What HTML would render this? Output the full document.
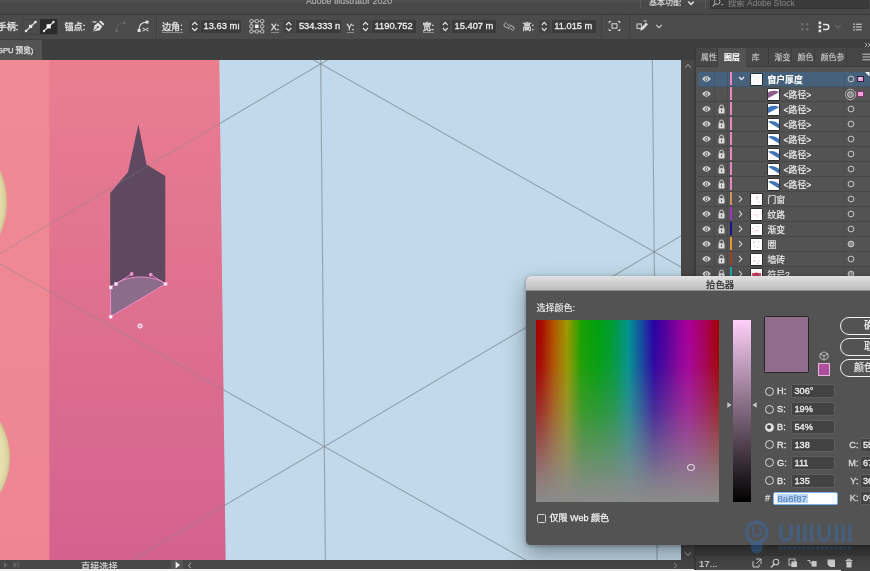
<!DOCTYPE html>
<html><head><meta charset="utf-8"><title>Adobe Illustrator 2020</title>
<style>
*{box-sizing:border-box;margin:0;padding:0}
html,body{width:870px;height:571px;overflow:hidden;background:#4a4a4a}
body{position:relative;font-family:"Liberation Sans","Noto Sans CJK SC",sans-serif;color:#e6e6e6;font-size:10px;line-height:1}
.a{position:absolute}
.fld,.lbl,.pf,.pl{-webkit-text-stroke:.28px currentColor}
.nm,.btn,.t{-webkit-text-stroke:.14px currentColor}
.t{position:absolute;white-space:nowrap;line-height:12px;height:12px}
.fld{position:absolute;top:20px;height:13px;background:#3b3b3b;border-radius:1.5px;color:#f0f0f0;font-size:9.3px;line-height:13px;padding-left:2.6px;white-space:nowrap;overflow:hidden}
.stp{position:absolute;top:20px;height:13px;width:11px;background:#424242;border-radius:1.5px}
.lbl{position:absolute;top:21.4px;height:12px;line-height:12px;font-size:9.1px;color:#e4e4e4;white-space:nowrap}
.ul{border-bottom:1px solid #8c8c8c;height:11.2px}
.row{position:absolute;left:698.2px;width:171.8px;height:15px;background:#535353;border-bottom:1px solid #474747}
.row.sel{background:#46617c}
.nm{position:absolute;top:2.3px;font-size:8.8px;line-height:12px;color:#f2f2f2;white-space:nowrap}
.th{position:absolute;top:1px;width:13px;height:13px;background:#fff;border:1px solid #2e2e2e;border-radius:1px;overflow:hidden}
.cb{position:absolute;left:31.4px;top:.6px;width:2.6px;height:13.4px}
.pf{position:absolute;left:790.5px;width:44.5px;height:14px;background:#424242;border:1px solid #5e5e5e;border-radius:2px;color:#f4f4f4;font-size:9.2px;line-height:12px;padding-left:3px}
.pl{position:absolute;font-size:9.2px;line-height:12px;color:#ececec;white-space:nowrap}
.rd{position:absolute;left:764.5px;width:9px;height:9px;border:1.2px solid #d8d8d8;border-radius:50%}
.btn{position:absolute;left:840px;width:40px;height:18px;border:1.3px solid #f2f2f2;border-radius:9px;color:#f4f4f4;font-size:10px;line-height:15px;white-space:nowrap}
</style></head><body><div id="app" style="position:absolute;left:0;top:0;width:870px;height:571px;overflow:hidden;will-change:transform">
<div class="a" style="left:0;top:0;width:870px;height:14.7px;background:linear-gradient(#505050,#484848 3px);border-bottom:1.2px solid #393939"></div>
<div class="t" style="left:306px;top:-4.9px;font-size:8.8px;color:#b2b2b2">Adobe Illustrator 2020</div>
<div class="a" style="left:640px;top:0;width:1px;height:9px;background:#5a5a5a"></div>
<div class="t" style="left:649px;top:-3.3px;font-size:8px;color:#e2e2e2">基本功能</div>
<svg class="a" style="left:687px;top:0" width="8" height="7" viewBox="0 0 8 7"><path d="M1.2 1.6 L4 4.4 L6.8 1.6" fill="none" stroke="#d8d8d8" stroke-width="1.5"/></svg>
<div class="a" style="left:705px;top:0;width:1px;height:9px;background:#5a5a5a"></div>
<div class="a" style="left:710px;top:-2px;width:159px;height:10.5px;background:#3a3a3a;border:1px solid #333;border-radius:2px"></div>
<svg class="a" style="left:712px;top:0" width="12" height="8" viewBox="0 0 12 8"><circle cx="5.2" cy="1.6" r="2.8" fill="none" stroke="#b5b5b5" stroke-width="1"/><path d="M3.2 3.8 L0.8 6.4" stroke="#b5b5b5" stroke-width="1.1"/><path d="M9 4 l1.3 1.4 l1.3 -1.4z" fill="#b5b5b5"/></svg>
<div class="t" style="left:728px;top:-3.5px;font-size:8.4px;color:#7d7d7d">搜索 Adobe Stock</div>
<div class="a" style="left:0;top:14.7px;width:870px;height:24.5px;background:#4b4b4b"></div>
<div class="lbl" style="left:-2.4px">手柄:</div>
<div class="a" style="left:22px;top:18.5px;width:35.5px;height:16px;border:1px solid #434343;border-radius:2px"></div>
<div class="a" style="left:40px;top:19px;width:16.5px;height:15px;background:#2b2b2b"></div>
<svg class="a" style="left:24px;top:19px" width="14" height="15" viewBox="0 0 14 15"><path d="M2 12 L11.5 3" stroke="#e0e0e0" stroke-width="1.1"/><rect x="5" y="5.8" width="3.2" height="3.2" fill="#e8e8e8"/><circle cx="2" cy="12" r="1.3" fill="#e8e8e8"/><circle cx="11.5" cy="3" r="1.3" fill="#e8e8e8"/></svg>
<svg class="a" style="left:41.5px;top:19px" width="14" height="15" viewBox="0 0 14 15"><path d="M2 12 L11.5 3" stroke="#e0e0e0" stroke-width="1.1"/><rect x="4.6" y="5.2" width="4.2" height="4.2" fill="#ffffff"/><circle cx="2" cy="12" r="1.2" fill="#e8e8e8"/><circle cx="11.5" cy="3" r="1.2" fill="#e8e8e8"/></svg>
<div class="lbl" style="left:64.5px">锚点:</div>
<svg class="a" style="left:92px;top:20px" width="13" height="13" viewBox="0 0 13 13"><path d="M1.2 11.6 L2.6 5.2 L6.2 2.6 L10.2 6.6 L7.8 10.2 Z" fill="#dedede"/><path d="M7 1.6 L8.8 0.4 L12.4 4 L11.2 5.8 Z" fill="#dedede"/><path d="M1.6 11.2 L5.4 7.4" stroke="#4b4b4b" stroke-width="1"/><circle cx="5.8" cy="7" r="1" fill="#4b4b4b"/><rect x="0.6" y="1.3" width="3.8" height="1.2" fill="#dedede"/></svg>
<svg class="a" style="left:114px;top:20px" width="13" height="13" viewBox="0 0 13 13"><path d="M2.6 9.4 C2.8 5.6 5 3.4 8.6 3" fill="none" stroke="#6a6a6a" stroke-width="1" stroke-dasharray="2 1"/><rect x="1.4" y="9.4" width="2.4" height="2.4" fill="#6c6c6c"/><rect x="9" y="1.6" width="2.4" height="2.4" fill="#6c6c6c"/></svg>
<svg class="a" style="left:137px;top:20px" width="13" height="13" viewBox="0 0 13 13"><path d="M2 10 C2 5 5 2.5 9.5 2.2" fill="none" stroke="#d8d8d8" stroke-width="1.2"/><rect x="0.6" y="9" width="3" height="3" fill="#e0e0e0"/><rect x="8.6" y="0.6" width="3" height="3" fill="#e0e0e0"/><path d="M5.5 8 L11.5 11 M5.5 11 L11.5 8" stroke="#d8d8d8" stroke-width="1"/></svg>
<div class="a" style="left:156px;top:15px;width:1px;height:23px;background:#3e3e3e"></div><div class="a" style="left:157px;top:15px;width:1px;height:23px;background:#545454"></div>
<div class="lbl ul" style="left:162px">边角:</div>
<div class="stp" style="left:188.5px;width:11.5px"><svg width="11.5" height="13" viewBox="0 0 11 13" preserveAspectRatio="none" style="display:block"><path d="M3 5 L5.5 2.4 L8 5 M3 8 L5.5 10.6 L8 8" fill="none" stroke="#e8e8e8" stroke-width="1.1"/></svg></div>
<div class="fld" style="left:201px;width:39.5px">13.63 m&#305;</div>
<svg class="a" style="left:248.5px;top:18.5px" width="16" height="15" viewBox="0 0 16 15"><rect x="0.7999999999999998" y="0.6000000000000001" width="3.2" height="3.2" rx="1" fill="none" stroke="#cfcfcf" stroke-width="0.9"/><rect x="6.199999999999999" y="0.6000000000000001" width="3.2" height="3.2" rx="1" fill="none" stroke="#cfcfcf" stroke-width="0.9"/><rect x="11.6" y="0.6000000000000001" width="3.2" height="3.2" rx="1" fill="none" stroke="#cfcfcf" stroke-width="0.9"/><rect x="0.7999999999999998" y="5.699999999999999" width="3.2" height="3.2" rx="1" fill="none" stroke="#cfcfcf" stroke-width="0.9"/><rect x="6.1" y="5.6" width="3.4" height="3.4" fill="#fff"/><rect x="11.6" y="5.699999999999999" width="3.2" height="3.2" rx="1" fill="none" stroke="#cfcfcf" stroke-width="0.9"/><rect x="0.7999999999999998" y="10.8" width="3.2" height="3.2" rx="1" fill="none" stroke="#cfcfcf" stroke-width="0.9"/><rect x="6.199999999999999" y="10.8" width="3.2" height="3.2" rx="1" fill="none" stroke="#cfcfcf" stroke-width="0.9"/><rect x="11.6" y="10.8" width="3.2" height="3.2" rx="1" fill="none" stroke="#cfcfcf" stroke-width="0.9"/><path d="M4.2 2.2H6 M9.6 2.2H11.4 M4.2 12.4H6 M9.6 12.4H11.4 M2.4 4V5.5 M2.4 9.1V10.6 M13.2 4V5.5 M13.2 9.1V10.6" stroke="#cfcfcf" stroke-width="0.8"/></svg>
<div class="lbl ul" style="left:271px;font-size:8.6px">X:</div>
<div class="stp" style="left:283px;width:11.5px"><svg width="11.5" height="13" viewBox="0 0 11 13" preserveAspectRatio="none" style="display:block"><path d="M3 5 L5.5 2.4 L8 5 M3 8 L5.5 10.6 L8 8" fill="none" stroke="#e8e8e8" stroke-width="1.1"/></svg></div>
<div class="fld" style="left:296.3px;width:44.5px">534.333 n</div>
<div class="lbl ul" style="left:346.5px;font-size:8.6px">Y:</div>
<div class="stp" style="left:359.7px;width:11px"><svg width="11" height="13" viewBox="0 0 11 13" preserveAspectRatio="none" style="display:block"><path d="M3 5 L5.5 2.4 L8 5 M3 8 L5.5 10.6 L8 8" fill="none" stroke="#e8e8e8" stroke-width="1.1"/></svg></div>
<div class="fld" style="left:372px;width:44.3px">1190.752</div>
<div class="lbl ul" style="left:422.5px">宽:</div>
<div class="stp" style="left:439.5px;width:10.5px"><svg width="10.5" height="13" viewBox="0 0 11 13" preserveAspectRatio="none" style="display:block"><path d="M3 5 L5.5 2.4 L8 5 M3 8 L5.5 10.6 L8 8" fill="none" stroke="#e8e8e8" stroke-width="1.1"/></svg></div>
<div class="fld" style="left:452px;width:44px">15.407 m</div>
<svg class="a" style="left:502.5px;top:21px" width="12" height="11" viewBox="0 0 12 11"><g fill="none" stroke="#a8a8a8" stroke-width="1.05"><rect x="0.9" y="2.9" width="6" height="3.6" rx="1.8" transform="rotate(28 3.9 4.7)"/><rect x="5.1" y="4.9" width="6" height="3.6" rx="1.8" transform="rotate(28 8.1 6.7)"/></g><path d="M2.2 0.8 L10 10.2" stroke="#4b4b4b" stroke-width="2.2"/><path d="M2.2 0.8 L10 10.2" stroke="#a8a8a8" stroke-width="0.9"/></svg>
<div class="lbl" style="left:522.5px">高:</div>
<div class="stp" style="left:539px;width:10.5px"><svg width="10.5" height="13" viewBox="0 0 11 13" preserveAspectRatio="none" style="display:block"><path d="M3 5 L5.5 2.4 L8 5 M3 8 L5.5 10.6 L8 8" fill="none" stroke="#e8e8e8" stroke-width="1.1"/></svg></div>
<div class="fld" style="left:551.7px;width:44px">11.015 m</div>
<div class="a" style="left:601px;top:15px;width:1px;height:23px;background:#424242"></div>
<svg class="a" style="left:608px;top:20px" width="13" height="12" viewBox="0 0 13 12"><rect x="4" y="3.8" width="5" height="4.4" fill="none" stroke="#d8d8d8" stroke-width="1"/><path d="M0.8 1 h2.8 l-2.8 2.6z M12.2 1 h-2.8 l2.8 2.6z M0.8 11 h2.8 l-2.8 -2.6z M12.2 11 h-2.8 l2.8 -2.6z" fill="#d8d8d8"/></svg>
<div class="a" style="left:628.5px;top:15px;width:1px;height:23px;background:#424242"></div>
<svg class="a" style="left:635.5px;top:20px" width="13" height="13" viewBox="0 0 13 13"><rect x="1" y="4" width="4.4" height="4.4" fill="none" stroke="#d8d8d8" stroke-width="1"/><path d="M4.2 10.8 L5 8 L10 2.6 L12 4.4 L7 9.8 Z" fill="#d8d8d8"/><path d="M7.6 1 h3" stroke="#d8d8d8" stroke-width="1"/></svg>
<svg class="a" style="left:655px;top:23px" width="8" height="7" viewBox="0 0 8 7"><path d="M1.2 1.8 L4 4.6 L6.8 1.8" fill="none" stroke="#d0d0d0" stroke-width="1.1"/></svg>
<svg class="a" style="left:799.5px;top:21.5px" width="10" height="10" viewBox="0 0 10 10"><rect x="1" y="1" width="2.6" height="2.6" rx=".8" fill="#6e6e6e"/><rect x="6" y="1" width="2.6" height="2.6" rx=".8" fill="#6e6e6e"/><rect x="1" y="6" width="2.6" height="2.6" rx=".8" fill="#6e6e6e"/><rect x="6" y="6" width="2.6" height="2.6" rx=".8" fill="#6e6e6e"/></svg>
<svg class="a" style="left:817.5px;top:20.5px" width="13" height="12" viewBox="0 0 13 12"><rect x="0.6" y="0.6" width="2.6" height="2.6" fill="#e6e6e6"/><rect x="0.6" y="4.6" width="2.6" height="2.6" fill="#e6e6e6"/><rect x="0.6" y="8.6" width="2.6" height="2.6" fill="#e6e6e6"/><path d="M5 3.6 h3.4 a2.4 2.4 0 0 1 0 4.8 h-3.4" fill="none" stroke="#e6e6e6" stroke-width="1.5"/></svg>
<svg class="a" style="left:833.5px;top:23.5px" width="8" height="6" viewBox="0 0 8 6"><path d="M1 1.2 L3.8 4 L6.6 1.2" fill="none" stroke="#6c6c6c" stroke-width="1.1"/></svg>
<svg class="a" style="left:853px;top:22.5px" width="9" height="8" viewBox="0 0 9 8"><path d="M0.3 1.2h1.4M0.3 4h1.4M0.3 6.8h1.4" stroke="#dcdcdc" stroke-width="1.3"/><path d="M2.8 1.2h6M2.8 4h6M2.8 6.8h6" stroke="#dcdcdc" stroke-width="1"/></svg>
<div class="a" style="left:0;top:39.2px;width:870px;height:21px;background:#3e3e3e"></div>
<div class="a" style="left:0;top:40px;width:41.7px;height:20px;background:#535353"></div>
<div class="t" style="left:-3px;top:44.8px;font-size:7.6px;color:#e4e4e4;-webkit-text-stroke:.25px currentColor">GPU 预览)</div>
<svg class="a" style="left:0;top:59.6px" width="681.2" height="500" viewBox="0 59.6 681.2 500">
<defs><linearGradient id="pk" x1="0" y1="0" x2="0" y2="1"><stop offset="0" stop-color="#ea7e90"/><stop offset="1" stop-color="#d3628f"/></linearGradient><linearGradient id="lp" x1="0" y1="0" x2="0" y2="1"><stop offset="0" stop-color="#f08a95"/><stop offset="1" stop-color="#ef8593"/></linearGradient><radialGradient id="sp" cx="0.5" cy="0.5" r="0.5"><stop offset="0" stop-color="#ece6b6"/><stop offset="0.9" stop-color="#e6dfae"/><stop offset="0.965" stop-color="#dcd3a0"/><stop offset="1" stop-color="#cbbd8e"/></radialGradient><clipPath id="cw"><path d="M110.2 287.4 L110.2 192.7 L128 171.6 L138.4 124 L146.5 164.2 L165.3 175.7 L165.3 283.5 Z"/></clipPath></defs>
<rect x="0" y="59" width="682" height="502" fill="#c1d9ea"/>
<polygon points="0,59 219.2,59 225.6,561 0,561" fill="url(#pk)"/>
<rect x="0" y="59" width="49.3" height="502" fill="url(#lp)"/>
<g id="gl" stroke="#7d8891" stroke-width="1.1" stroke-opacity="0.68"><line x1="309.9" y1="-1084.6" x2="331.5" y2="1211.6"/><line x1="643.4" y1="-896.7" x2="665.0" y2="1399.5"/><line x1="-679.8" y1="-500.2" x2="1321.2" y2="627.2"/><line x1="-676.2" y1="-117.5" x2="1324.8" y2="1009.9"/><line x1="-669.0" y1="647.9" x2="1310.4" y2="-520.9"/><line x1="-665.4" y1="1030.6" x2="1314.0" y2="-138.2"/></g>
<polygon points="49.3,59 219.2,59 225.6,561 49.3,561" fill="url(#pk)" fill-opacity="0.45"/>
<rect x="0" y="59" width="49.3" height="502" fill="url(#lp)" fill-opacity="0.4"/>
<circle cx="-73" cy="202" r="80" fill="url(#sp)"/><circle cx="-60" cy="457" r="70" fill="url(#sp)"/>
<path d="M110.2 287.4 L110.2 192.7 L128 171.6 L138.4 124 L146.5 164.2 L165.3 175.7 L165.3 283.5 C160 279 150 276.3 138.5 276.6 C127 277 117 281 110.2 287.4 Z" fill="#5e4961"/>
<path d="M110.6 287.2 C117 281 127 277 138.5 276.6 C150 276.3 160 279 165.5 283.5 L110.6 316.3 Z" fill="#8b6d89" stroke="#f290cf" stroke-width="0.9"/>
<line x1="-669.0" y1="647.9" x2="1310.4" y2="-520.9" stroke="#8a8f9a" stroke-width="1" stroke-opacity="0.3" clip-path="url(#cw)"/>
<path d="M116 283.5 L131.7 273.6 M165.5 283.5 L150.7 274.2" stroke="#f290cf" stroke-width="0.9"/>
<circle cx="131.7" cy="273.6" r="1.9" fill="#f290cf"/><circle cx="150.7" cy="274.2" r="1.9" fill="#f290cf"/>
<rect x="109.10000000000001" y="285.4" width="3.2" height="3.2" fill="#fff" stroke="#f290cf" stroke-width="0.6"/><rect x="114.4" y="281.9" width="3.2" height="3.2" fill="#fff" stroke="#f290cf" stroke-width="0.6"/><rect x="163.9" y="281.9" width="3.2" height="3.2" fill="#fff" stroke="#f290cf" stroke-width="0.6"/><rect x="109.10000000000001" y="314.7" width="3.2" height="3.2" fill="#fff" stroke="#f290cf" stroke-width="0.6"/>
<circle cx="140.1" cy="325.5" r="2.2" fill="#f6c4e2" stroke="#fbe6f3" stroke-width="0.9"/><circle cx="140.1" cy="325.5" r="0.9" fill="#e47cbc"/>
</svg>
<div class="a" style="left:681.2px;top:59.6px;width:13.2px;height:500px;background:#474747"></div>
<svg class="a" style="left:683.5px;top:63px" width="8" height="6" viewBox="0 0 8 6"><path d="M1 4.6 L4 1.6 L7 4.6" fill="none" stroke="#8c8c8c" stroke-width="1.1"/></svg>
<svg class="a" style="left:683.5px;top:551px" width="8" height="6" viewBox="0 0 8 6"><path d="M1 1.4 L4 4.4 L7 1.4" fill="none" stroke="#8c8c8c" stroke-width="1.1"/></svg>
<div class="a" style="left:0;top:559.6px;width:694.4px;height:9.2px;background:#474747"></div>
<div class="a" style="left:171px;top:559.6px;width:12px;height:9.2px;background:#555"></div>
<div class="a" style="left:0;top:568.7px;width:841px;height:3px;background:#f4f4f4"></div>
<svg class="a" style="left:3px;top:561px" width="18" height="8" viewBox="0 0 18 8"><path d="M1 1 L4.5 4 L1 7Z M10.5 1 L14 4 L10.5 7Z" fill="#6a6a6a"/><path d="M15.2 1V7" stroke="#6a6a6a" stroke-width="1"/></svg>
<div class="t" style="left:81px;top:560.5px;font-size:9.2px;color:#e0e0e0;height:8.2px;overflow:hidden">直接选择</div>
<svg class="a" style="left:174.5px;top:561px" width="6" height="8" viewBox="0 0 6 8"><path d="M0.6 0.6 L5 4 L0.6 7.4Z" fill="#f0f0f0"/></svg>
<svg class="a" style="left:186.5px;top:561.5px" width="5" height="7" viewBox="0 0 5 7"><path d="M4 0.8 L1.2 3.5 L4 6.2" fill="none" stroke="#b0b0b0" stroke-width="1"/></svg>
<svg class="a" style="left:672.5px;top:561.5px" width="5" height="7" viewBox="0 0 5 7"><path d="M1 0.8 L3.8 3.5 L1 6.2" fill="none" stroke="#9a9a9a" stroke-width="1"/></svg>
<div class="a" style="left:694.4px;top:38.5px;width:176px;height:531px;background:#535353"></div>
<div class="a" style="left:694.4px;top:38.5px;width:1.8px;height:531px;background:#3c3c3c"></div>
<div class="a" style="left:694.4px;top:38.5px;width:176px;height:9px;background:#3e3e3e"></div>
<svg class="a" style="left:863.5px;top:41.5px" width="7" height="6" viewBox="0 0 7 6"><path d="M0.8 0.8 L3 3 L0.8 5.2 M3.8 0.8 L6 3 L3.8 5.2" fill="none" stroke="#c0c0c0" stroke-width="0.9"/></svg>
<div class="a" style="left:696.2px;top:47.5px;width:174px;height:19px;background:#454545;border-bottom:1px solid #3c3c3c"></div>
<div class="a" style="left:697px;top:47.5px;width:21px;height:18px;background:#474747;border-right:1px solid #3d3d3d"></div><div class="t" style="left:689px;top:52px;width:40px;text-align:center;font-size:7.9px;color:#c9c9c9">属性</div>
<div class="a" style="left:718px;top:47.5px;width:28px;height:19.5px;background:#535353"></div><div class="t b" style="left:712px;top:52px;width:40px;text-align:center;font-size:7.9px;color:#fff;font-weight:bold">图层</div>
<div class="a" style="left:746px;top:47.5px;width:23px;height:18px;background:#474747;border-right:1px solid #3d3d3d"></div><div class="t" style="left:735.7px;top:52px;width:40px;text-align:center;font-size:7.9px;color:#c9c9c9">库</div>
<div class="a" style="left:769px;top:47.5px;width:23px;height:18px;background:#474747;border-right:1px solid #3d3d3d"></div><div class="t" style="left:762.5px;top:52px;width:40px;text-align:center;font-size:7.9px;color:#c9c9c9">渐变</div>
<div class="a" style="left:792px;top:47.5px;width:23px;height:18px;background:#474747;border-right:1px solid #3d3d3d"></div><div class="t" style="left:785.4px;top:52px;width:40px;text-align:center;font-size:7.9px;color:#c9c9c9">颜色</div>
<div class="a" style="left:815px;top:47.5px;width:31.5px;height:18px;background:#474747;border-right:1px solid #3d3d3d"></div><div class="t" style="left:812.5px;top:52px;width:40px;text-align:center;font-size:7.9px;color:#c9c9c9">颜色参</div>
<svg class="a" style="left:861.5px;top:53px" width="9" height="8" viewBox="0 0 9 8"><path d="M0.5 1.2h8M0.5 4h8M0.5 6.8h8" stroke="#c8c8c8" stroke-width="1"/></svg>
<div class="row sel" style="top:71.5px;border-bottom-color:#3f566d"><svg class="a" style="left:3.4px;top:4.2px" width="9" height="6" viewBox="0 0 9 6"><path d="M0.3 3 C1.8 0.9 3.2 0.35 4.5 0.35 C5.8 0.35 7.2 0.9 8.7 3 C7.2 5.1 5.8 5.65 4.5 5.65 C3.2 5.65 1.8 5.1 0.3 3Z" fill="#dcdcdc"/><circle cx="4.5" cy="3" r="1.85" fill="#46617c"/><circle cx="4.5" cy="3" r="0.95" fill="#dcdcdc"/></svg><div class="cb" style="background:#ec84c2"></div><svg class="a" style="left:39.6px;top:4.8px" width="7" height="5" viewBox="0 0 7 5"><path d="M1 1 L3.5 3.6 L6 1" fill="none" stroke="#ececec" stroke-width="1.35"/></svg><div class="th" style="left:52.2px"><svg width="11" height="11" viewBox="0 0 11 11" style="display:block"><rect x="2.1" y="7.8" width="1" height="1" fill="#ecc6d4"/><rect x="7.1" y="3.0" width="1" height="1" fill="#ecc6d4"/><rect x="5.0" y="4.6" width="1" height="1" fill="#ecc6d4"/><rect x="6.2" y="7.3" width="1" height="1" fill="#ecc6d4"/><rect x="1.8" y="1.2" width="1" height="1" fill="#ecc6d4"/></svg></div><div class="nm b" style="left:69.3px;font-weight:bold;color:#fff">窗户厚度</div><svg class="a" style="left:148.8px;top:3.5px" width="8" height="8" viewBox="0 0 8 8"><circle cx="4" cy="4" r="2.9" fill="none" stroke="#cfcfcf" stroke-width="0.95"/></svg><div class="a" style="left:159px;top:4px;width:6.6px;height:6.6px;background:#f4a2dd;border:1.4px solid #2c2340"><div class="a" style="left:1px;top:1px;width:1.8px;height:1.8px;background:#fff"></div></div><svg class="a" style="left:167.3px;top:0" width="4.5" height="4.5" viewBox="0 0 4.5 4.5"><path d="M0 0H4.5V4.5Z" fill="#fff"/></svg></div>
<div class="row" style="top:86.5px"><svg class="a" style="left:3.4px;top:4.2px" width="9" height="6" viewBox="0 0 9 6"><path d="M0.3 3 C1.8 0.9 3.2 0.35 4.5 0.35 C5.8 0.35 7.2 0.9 8.7 3 C7.2 5.1 5.8 5.65 4.5 5.65 C3.2 5.65 1.8 5.1 0.3 3Z" fill="#dcdcdc"/><circle cx="4.5" cy="3" r="1.85" fill="#535353"/><circle cx="4.5" cy="3" r="0.95" fill="#dcdcdc"/></svg><div class="cb" style="background:#ec84c2"></div><div class="th" style="left:69.1px"><svg width="11" height="11" viewBox="0 0 11 11" style="display:block"><path d="M0 3.6 C2.4 1.4 7.4 0.9 11 3.2 L0 9.2 Z" fill="#8b5f8a"/></svg></div><div class="nm" style="left:85.3px">&lt;路径&gt;</div><svg class="a" style="left:146.3px;top:1px" width="13" height="13" viewBox="0 0 13 13"><circle cx="6.5" cy="6.5" r="5.2" fill="none" stroke="#bdbdbd" stroke-width="0.9"/><circle cx="6.5" cy="6.5" r="3" fill="#8a8a8a" stroke="#d0d0d0" stroke-width="0.9"/></svg><div class="a" style="left:159.3px;top:4px;width:6.4px;height:6.4px;background:#f7a0db;border:1px solid #7a3a68"></div></div>
<div class="row" style="top:101.5px"><svg class="a" style="left:3.4px;top:4.2px" width="9" height="6" viewBox="0 0 9 6"><path d="M0.3 3 C1.8 0.9 3.2 0.35 4.5 0.35 C5.8 0.35 7.2 0.9 8.7 3 C7.2 5.1 5.8 5.65 4.5 5.65 C3.2 5.65 1.8 5.1 0.3 3Z" fill="#dcdcdc"/><circle cx="4.5" cy="3" r="1.85" fill="#535353"/><circle cx="4.5" cy="3" r="0.95" fill="#dcdcdc"/></svg><svg class="a" style="left:19.8px;top:2.6px" width="7" height="10" viewBox="0 0 7 10"><path d="M1.7 4.4 V2.8 a1.8 1.8 0 0 1 3.6 0 V4.4" fill="none" stroke="#dcdcdc" stroke-width="1"/><rect x="0.5" y="4.2" width="6" height="5.2" rx=".6" fill="#dcdcdc"/><rect x="3" y="5.8" width="1" height="2" fill="#535353"/></svg><div class="cb" style="background:#ec84c2"></div><div class="th" style="left:69.1px"><svg width="11" height="11" viewBox="0 0 11 11" style="display:block"><path d="M0 3.6 C2.4 1.4 7.4 0.9 11 3.2 L0 9.2 Z" fill="#3f74b8"/></svg></div><div class="nm" style="left:85.3px">&lt;路径&gt;</div><svg class="a" style="left:148.8px;top:3.5px" width="8" height="8" viewBox="0 0 8 8"><circle cx="4" cy="4" r="2.9" fill="none" stroke="#cfcfcf" stroke-width="0.95"/></svg></div>
<div class="row" style="top:116.5px"><svg class="a" style="left:3.4px;top:4.2px" width="9" height="6" viewBox="0 0 9 6"><path d="M0.3 3 C1.8 0.9 3.2 0.35 4.5 0.35 C5.8 0.35 7.2 0.9 8.7 3 C7.2 5.1 5.8 5.65 4.5 5.65 C3.2 5.65 1.8 5.1 0.3 3Z" fill="#dcdcdc"/><circle cx="4.5" cy="3" r="1.85" fill="#535353"/><circle cx="4.5" cy="3" r="0.95" fill="#dcdcdc"/></svg><svg class="a" style="left:19.8px;top:2.6px" width="7" height="10" viewBox="0 0 7 10"><path d="M1.7 4.4 V2.8 a1.8 1.8 0 0 1 3.6 0 V4.4" fill="none" stroke="#dcdcdc" stroke-width="1"/><rect x="0.5" y="4.2" width="6" height="5.2" rx=".6" fill="#dcdcdc"/><rect x="3" y="5.8" width="1" height="2" fill="#535353"/></svg><div class="cb" style="background:#ec84c2"></div><div class="th" style="left:69.1px"><svg width="11" height="11" viewBox="0 0 11 11" style="display:block"><path d="M0 2.8 C2.6 1.2 7 1.6 11 5 L11 9.4 Z" fill="#3f74b8"/></svg></div><div class="nm" style="left:85.3px">&lt;路径&gt;</div><svg class="a" style="left:148.8px;top:3.5px" width="8" height="8" viewBox="0 0 8 8"><circle cx="4" cy="4" r="2.9" fill="none" stroke="#cfcfcf" stroke-width="0.95"/></svg></div>
<div class="row" style="top:131.5px"><svg class="a" style="left:3.4px;top:4.2px" width="9" height="6" viewBox="0 0 9 6"><path d="M0.3 3 C1.8 0.9 3.2 0.35 4.5 0.35 C5.8 0.35 7.2 0.9 8.7 3 C7.2 5.1 5.8 5.65 4.5 5.65 C3.2 5.65 1.8 5.1 0.3 3Z" fill="#dcdcdc"/><circle cx="4.5" cy="3" r="1.85" fill="#535353"/><circle cx="4.5" cy="3" r="0.95" fill="#dcdcdc"/></svg><svg class="a" style="left:19.8px;top:2.6px" width="7" height="10" viewBox="0 0 7 10"><path d="M1.7 4.4 V2.8 a1.8 1.8 0 0 1 3.6 0 V4.4" fill="none" stroke="#dcdcdc" stroke-width="1"/><rect x="0.5" y="4.2" width="6" height="5.2" rx=".6" fill="#dcdcdc"/><rect x="3" y="5.8" width="1" height="2" fill="#535353"/></svg><div class="cb" style="background:#ec84c2"></div><div class="th" style="left:69.1px"><svg width="11" height="11" viewBox="0 0 11 11" style="display:block"><path d="M0 2.8 C2.6 1.2 7 1.6 11 5 L11 9.4 Z" fill="#3f74b8"/></svg></div><div class="nm" style="left:85.3px">&lt;路径&gt;</div><svg class="a" style="left:148.8px;top:3.5px" width="8" height="8" viewBox="0 0 8 8"><circle cx="4" cy="4" r="2.9" fill="none" stroke="#cfcfcf" stroke-width="0.95"/></svg></div>
<div class="row" style="top:146.5px"><svg class="a" style="left:3.4px;top:4.2px" width="9" height="6" viewBox="0 0 9 6"><path d="M0.3 3 C1.8 0.9 3.2 0.35 4.5 0.35 C5.8 0.35 7.2 0.9 8.7 3 C7.2 5.1 5.8 5.65 4.5 5.65 C3.2 5.65 1.8 5.1 0.3 3Z" fill="#dcdcdc"/><circle cx="4.5" cy="3" r="1.85" fill="#535353"/><circle cx="4.5" cy="3" r="0.95" fill="#dcdcdc"/></svg><svg class="a" style="left:19.8px;top:2.6px" width="7" height="10" viewBox="0 0 7 10"><path d="M1.7 4.4 V2.8 a1.8 1.8 0 0 1 3.6 0 V4.4" fill="none" stroke="#dcdcdc" stroke-width="1"/><rect x="0.5" y="4.2" width="6" height="5.2" rx=".6" fill="#dcdcdc"/><rect x="3" y="5.8" width="1" height="2" fill="#535353"/></svg><div class="cb" style="background:#ec84c2"></div><div class="th" style="left:69.1px"><svg width="11" height="11" viewBox="0 0 11 11" style="display:block"><path d="M0 2.8 C2.6 1.2 7 1.6 11 5 L11 9.4 Z" fill="#3f74b8"/></svg></div><div class="nm" style="left:85.3px">&lt;路径&gt;</div><svg class="a" style="left:148.8px;top:3.5px" width="8" height="8" viewBox="0 0 8 8"><circle cx="4" cy="4" r="2.9" fill="none" stroke="#cfcfcf" stroke-width="0.95"/></svg></div>
<div class="row" style="top:161.5px"><svg class="a" style="left:3.4px;top:4.2px" width="9" height="6" viewBox="0 0 9 6"><path d="M0.3 3 C1.8 0.9 3.2 0.35 4.5 0.35 C5.8 0.35 7.2 0.9 8.7 3 C7.2 5.1 5.8 5.65 4.5 5.65 C3.2 5.65 1.8 5.1 0.3 3Z" fill="#dcdcdc"/><circle cx="4.5" cy="3" r="1.85" fill="#535353"/><circle cx="4.5" cy="3" r="0.95" fill="#dcdcdc"/></svg><svg class="a" style="left:19.8px;top:2.6px" width="7" height="10" viewBox="0 0 7 10"><path d="M1.7 4.4 V2.8 a1.8 1.8 0 0 1 3.6 0 V4.4" fill="none" stroke="#dcdcdc" stroke-width="1"/><rect x="0.5" y="4.2" width="6" height="5.2" rx=".6" fill="#dcdcdc"/><rect x="3" y="5.8" width="1" height="2" fill="#535353"/></svg><div class="cb" style="background:#ec84c2"></div><div class="th" style="left:69.1px"><svg width="11" height="11" viewBox="0 0 11 11" style="display:block"><path d="M0 2.8 C2.6 1.2 7 1.6 11 5 L11 9.4 Z" fill="#3f74b8"/></svg></div><div class="nm" style="left:85.3px">&lt;路径&gt;</div><svg class="a" style="left:148.8px;top:3.5px" width="8" height="8" viewBox="0 0 8 8"><circle cx="4" cy="4" r="2.9" fill="none" stroke="#cfcfcf" stroke-width="0.95"/></svg></div>
<div class="row" style="top:176.5px"><svg class="a" style="left:3.4px;top:4.2px" width="9" height="6" viewBox="0 0 9 6"><path d="M0.3 3 C1.8 0.9 3.2 0.35 4.5 0.35 C5.8 0.35 7.2 0.9 8.7 3 C7.2 5.1 5.8 5.65 4.5 5.65 C3.2 5.65 1.8 5.1 0.3 3Z" fill="#dcdcdc"/><circle cx="4.5" cy="3" r="1.85" fill="#535353"/><circle cx="4.5" cy="3" r="0.95" fill="#dcdcdc"/></svg><svg class="a" style="left:19.8px;top:2.6px" width="7" height="10" viewBox="0 0 7 10"><path d="M1.7 4.4 V2.8 a1.8 1.8 0 0 1 3.6 0 V4.4" fill="none" stroke="#dcdcdc" stroke-width="1"/><rect x="0.5" y="4.2" width="6" height="5.2" rx=".6" fill="#dcdcdc"/><rect x="3" y="5.8" width="1" height="2" fill="#535353"/></svg><div class="cb" style="background:#ec84c2"></div><div class="th" style="left:69.1px"><svg width="11" height="11" viewBox="0 0 11 11" style="display:block"><path d="M0 2.8 C2.6 1.2 7 1.6 11 5 L11 9.4 Z" fill="#3f74b8"/></svg></div><div class="nm" style="left:85.3px">&lt;路径&gt;</div><svg class="a" style="left:148.8px;top:3.5px" width="8" height="8" viewBox="0 0 8 8"><circle cx="4" cy="4" r="2.9" fill="none" stroke="#cfcfcf" stroke-width="0.95"/></svg></div>
<div class="row" style="top:191.5px"><svg class="a" style="left:3.4px;top:4.2px" width="9" height="6" viewBox="0 0 9 6"><path d="M0.3 3 C1.8 0.9 3.2 0.35 4.5 0.35 C5.8 0.35 7.2 0.9 8.7 3 C7.2 5.1 5.8 5.65 4.5 5.65 C3.2 5.65 1.8 5.1 0.3 3Z" fill="#dcdcdc"/><circle cx="4.5" cy="3" r="1.85" fill="#535353"/><circle cx="4.5" cy="3" r="0.95" fill="#dcdcdc"/></svg><svg class="a" style="left:19.8px;top:2.6px" width="7" height="10" viewBox="0 0 7 10"><path d="M1.7 4.4 V2.8 a1.8 1.8 0 0 1 3.6 0 V4.4" fill="none" stroke="#dcdcdc" stroke-width="1"/><rect x="0.5" y="4.2" width="6" height="5.2" rx=".6" fill="#dcdcdc"/><rect x="3" y="5.8" width="1" height="2" fill="#535353"/></svg><div class="cb" style="background:#c9975a"></div><svg class="a" style="left:39.6px;top:3.8px" width="5" height="8" viewBox="0 0 5 8"><path d="M1 0.8 L3.8 3.9 L1 7" fill="none" stroke="#dadada" stroke-width="1.05"/></svg><div class="th" style="left:52.2px"><svg width="11" height="11" viewBox="0 0 11 11" style="display:block"><rect x="5.6" y="4.4" width="1" height="1" fill="#caa"/><rect x="5.6" y="2.6" width="1" height="1" fill="#caa"/><rect x="7.5" y="7.6" width="1" height="1" fill="#caa"/><rect x="6.2" y="2.3" width="1" height="1" fill="#caa"/><rect x="5.2" y="3.6" width="1" height="1" fill="#caa"/></svg></div><div class="nm" style="left:69.3px">门窗</div><svg class="a" style="left:148.8px;top:3.5px" width="8" height="8" viewBox="0 0 8 8"><circle cx="4" cy="4" r="2.9" fill="none" stroke="#cfcfcf" stroke-width="0.95"/></svg></div>
<div class="row" style="top:206.5px"><svg class="a" style="left:3.4px;top:4.2px" width="9" height="6" viewBox="0 0 9 6"><path d="M0.3 3 C1.8 0.9 3.2 0.35 4.5 0.35 C5.8 0.35 7.2 0.9 8.7 3 C7.2 5.1 5.8 5.65 4.5 5.65 C3.2 5.65 1.8 5.1 0.3 3Z" fill="#dcdcdc"/><circle cx="4.5" cy="3" r="1.85" fill="#535353"/><circle cx="4.5" cy="3" r="0.95" fill="#dcdcdc"/></svg><svg class="a" style="left:19.8px;top:2.6px" width="7" height="10" viewBox="0 0 7 10"><path d="M1.7 4.4 V2.8 a1.8 1.8 0 0 1 3.6 0 V4.4" fill="none" stroke="#dcdcdc" stroke-width="1"/><rect x="0.5" y="4.2" width="6" height="5.2" rx=".6" fill="#dcdcdc"/><rect x="3" y="5.8" width="1" height="2" fill="#535353"/></svg><div class="cb" style="background:#a52fc4"></div><svg class="a" style="left:39.6px;top:3.8px" width="5" height="8" viewBox="0 0 5 8"><path d="M1 0.8 L3.8 3.9 L1 7" fill="none" stroke="#dadada" stroke-width="1.05"/></svg><div class="th" style="left:52.2px"><svg width="11" height="11" viewBox="0 0 11 11" style="display:block"><rect x="4.6" y="5.5" width="1" height="1" fill="#e5bfd0"/><rect x="8.4" y="4.7" width="1" height="1" fill="#e5bfd0"/><rect x="5.1" y="5.7" width="1" height="1" fill="#e5bfd0"/><rect x="2.5" y="5.1" width="1" height="1" fill="#e5bfd0"/><rect x="6.0" y="7.3" width="1" height="1" fill="#e5bfd0"/></svg></div><div class="nm" style="left:69.3px">纹路</div><svg class="a" style="left:148.8px;top:3.5px" width="8" height="8" viewBox="0 0 8 8"><circle cx="4" cy="4" r="2.9" fill="none" stroke="#cfcfcf" stroke-width="0.95"/></svg></div>
<div class="row" style="top:221.5px"><svg class="a" style="left:3.4px;top:4.2px" width="9" height="6" viewBox="0 0 9 6"><path d="M0.3 3 C1.8 0.9 3.2 0.35 4.5 0.35 C5.8 0.35 7.2 0.9 8.7 3 C7.2 5.1 5.8 5.65 4.5 5.65 C3.2 5.65 1.8 5.1 0.3 3Z" fill="#dcdcdc"/><circle cx="4.5" cy="3" r="1.85" fill="#535353"/><circle cx="4.5" cy="3" r="0.95" fill="#dcdcdc"/></svg><svg class="a" style="left:19.8px;top:2.6px" width="7" height="10" viewBox="0 0 7 10"><path d="M1.7 4.4 V2.8 a1.8 1.8 0 0 1 3.6 0 V4.4" fill="none" stroke="#dcdcdc" stroke-width="1"/><rect x="0.5" y="4.2" width="6" height="5.2" rx=".6" fill="#dcdcdc"/><rect x="3" y="5.8" width="1" height="2" fill="#535353"/></svg><div class="cb" style="background:#17108a"></div><svg class="a" style="left:39.6px;top:3.8px" width="5" height="8" viewBox="0 0 5 8"><path d="M1 0.8 L3.8 3.9 L1 7" fill="none" stroke="#dadada" stroke-width="1.05"/></svg><div class="th" style="left:52.2px"><svg width="11" height="11" viewBox="0 0 11 11" style="display:block"><rect x="4.8" y="6.3" width="1" height="1" fill="#d9a0bd"/><rect x="6.3" y="2.1" width="1" height="1" fill="#d9a0bd"/><rect x="1.1" y="4.0" width="1" height="1" fill="#d9a0bd"/><rect x="3.2" y="7.5" width="1" height="1" fill="#d9a0bd"/><rect x="6.5" y="5.8" width="1" height="1" fill="#d9a0bd"/></svg></div><div class="nm" style="left:69.3px">渐变</div><svg class="a" style="left:148.8px;top:3.5px" width="8" height="8" viewBox="0 0 8 8"><circle cx="4" cy="4" r="2.9" fill="none" stroke="#cfcfcf" stroke-width="0.95"/></svg></div>
<div class="row" style="top:236.5px"><svg class="a" style="left:3.4px;top:4.2px" width="9" height="6" viewBox="0 0 9 6"><path d="M0.3 3 C1.8 0.9 3.2 0.35 4.5 0.35 C5.8 0.35 7.2 0.9 8.7 3 C7.2 5.1 5.8 5.65 4.5 5.65 C3.2 5.65 1.8 5.1 0.3 3Z" fill="#dcdcdc"/><circle cx="4.5" cy="3" r="1.85" fill="#535353"/><circle cx="4.5" cy="3" r="0.95" fill="#dcdcdc"/></svg><svg class="a" style="left:19.8px;top:2.6px" width="7" height="10" viewBox="0 0 7 10"><path d="M1.7 4.4 V2.8 a1.8 1.8 0 0 1 3.6 0 V4.4" fill="none" stroke="#dcdcdc" stroke-width="1"/><rect x="0.5" y="4.2" width="6" height="5.2" rx=".6" fill="#dcdcdc"/><rect x="3" y="5.8" width="1" height="2" fill="#535353"/></svg><div class="cb" style="background:#ea962a"></div><svg class="a" style="left:39.6px;top:3.8px" width="5" height="8" viewBox="0 0 5 8"><path d="M1 0.8 L3.8 3.9 L1 7" fill="none" stroke="#dadada" stroke-width="1.05"/></svg><div class="th" style="left:52.2px"><svg width="11" height="11" viewBox="0 0 11 11" style="display:block"><rect x="3.1" y="6.5" width="1" height="1" fill="#bbb"/><rect x="6.5" y="7.8" width="1" height="1" fill="#bbb"/><rect x="2.5" y="2.8" width="1" height="1" fill="#bbb"/><rect x="2.2" y="2.8" width="1" height="1" fill="#bbb"/><rect x="6.9" y="2.0" width="1" height="1" fill="#bbb"/></svg></div><div class="nm" style="left:69.3px">圈</div><svg class="a" style="left:148.8px;top:3.5px" width="8" height="8" viewBox="0 0 8 8"><circle cx="4" cy="4" r="2.9" fill="#8e8e8e" stroke="#cfcfcf" stroke-width="0.95"/></svg></div>
<div class="row" style="top:251.5px"><svg class="a" style="left:3.4px;top:4.2px" width="9" height="6" viewBox="0 0 9 6"><path d="M0.3 3 C1.8 0.9 3.2 0.35 4.5 0.35 C5.8 0.35 7.2 0.9 8.7 3 C7.2 5.1 5.8 5.65 4.5 5.65 C3.2 5.65 1.8 5.1 0.3 3Z" fill="#dcdcdc"/><circle cx="4.5" cy="3" r="1.85" fill="#535353"/><circle cx="4.5" cy="3" r="0.95" fill="#dcdcdc"/></svg><svg class="a" style="left:19.8px;top:2.6px" width="7" height="10" viewBox="0 0 7 10"><path d="M1.7 4.4 V2.8 a1.8 1.8 0 0 1 3.6 0 V4.4" fill="none" stroke="#dcdcdc" stroke-width="1"/><rect x="0.5" y="4.2" width="6" height="5.2" rx=".6" fill="#dcdcdc"/><rect x="3" y="5.8" width="1" height="2" fill="#535353"/></svg><div class="cb" style="background:#a6401e"></div><svg class="a" style="left:39.6px;top:3.8px" width="5" height="8" viewBox="0 0 5 8"><path d="M1 0.8 L3.8 3.9 L1 7" fill="none" stroke="#dadada" stroke-width="1.05"/></svg><div class="th" style="left:52.2px"><svg width="11" height="11" viewBox="0 0 11 11" style="display:block"><rect x="1.9" y="6.6" width="1" height="1" fill="#d8a8b8"/><rect x="6.2" y="8.5" width="1" height="1" fill="#d8a8b8"/><rect x="3.2" y="3.0" width="1" height="1" fill="#d8a8b8"/><rect x="6.9" y="6.3" width="1" height="1" fill="#d8a8b8"/><rect x="3.4" y="6.5" width="1" height="1" fill="#d8a8b8"/></svg></div><div class="nm" style="left:69.3px">墙砖</div><svg class="a" style="left:148.8px;top:3.5px" width="8" height="8" viewBox="0 0 8 8"><circle cx="4" cy="4" r="2.9" fill="none" stroke="#cfcfcf" stroke-width="0.95"/></svg></div>
<div class="row" style="top:266.5px"><svg class="a" style="left:3.4px;top:4.2px" width="9" height="6" viewBox="0 0 9 6"><path d="M0.3 3 C1.8 0.9 3.2 0.35 4.5 0.35 C5.8 0.35 7.2 0.9 8.7 3 C7.2 5.1 5.8 5.65 4.5 5.65 C3.2 5.65 1.8 5.1 0.3 3Z" fill="#dcdcdc"/><circle cx="4.5" cy="3" r="1.85" fill="#535353"/><circle cx="4.5" cy="3" r="0.95" fill="#dcdcdc"/></svg><svg class="a" style="left:19.8px;top:2.6px" width="7" height="10" viewBox="0 0 7 10"><path d="M1.7 4.4 V2.8 a1.8 1.8 0 0 1 3.6 0 V4.4" fill="none" stroke="#dcdcdc" stroke-width="1"/><rect x="0.5" y="4.2" width="6" height="5.2" rx=".6" fill="#dcdcdc"/><rect x="3" y="5.8" width="1" height="2" fill="#535353"/></svg><div class="cb" style="background:#1ea8a8"></div><svg class="a" style="left:39.6px;top:3.8px" width="5" height="8" viewBox="0 0 5 8"><path d="M1 0.8 L3.8 3.9 L1 7" fill="none" stroke="#dadada" stroke-width="1.05"/></svg><div class="th" style="left:52.2px"><svg width="11" height="11" viewBox="0 0 11 11" style="display:block"><rect x="1" y="4" width="9" height="7" fill="#d85a78"/><circle cx="5.5" cy="6" r="2.6" fill="#c23e62"/></svg></div><div class="nm" style="left:69.3px">符号2</div><svg class="a" style="left:148.8px;top:3.5px" width="8" height="8" viewBox="0 0 8 8"><circle cx="4" cy="4" r="2.9" fill="#8e8e8e" stroke="#cfcfcf" stroke-width="0.95"/></svg></div>
<div class="a" style="left:714px;top:71.5px;width:1px;height:210px;background:rgba(60,60,60,.35)"></div><div class="a" style="left:727.2px;top:71.5px;width:1px;height:210px;background:rgba(60,60,60,.35)"></div><div class="a" style="left:844.4px;top:71.5px;width:1px;height:210px;background:rgba(60,60,60,.35)"></div>
<div class="a" style="left:696.2px;top:544px;width:174px;height:12.3px;background:#3e3e3e"></div>
<div class="a" style="left:696.2px;top:556.3px;width:174px;height:12.5px;background:#484848"></div>
<div class="a" style="left:841px;top:568.7px;width:29px;height:3px;background:#484848"></div>
<div class="t" style="left:699px;top:557.5px;font-size:9.5px;color:#e0e0e0">17...</div>
<svg class="a" style="left:752px;top:558px" width="10" height="10" viewBox="0 0 10 10"><path d="M1 3V9H7V6.5 M4 1H9V6 M9 1L4.5 5.5" fill="none" stroke="#d6d6d6" stroke-width="1"/></svg><svg class="a" style="left:770.3px;top:558px" width="10" height="10" viewBox="0 0 10 10"><circle cx="6" cy="4" r="2.8" fill="none" stroke="#d6d6d6" stroke-width="1.1"/><path d="M4 6.2L1 9.4" stroke="#d6d6d6" stroke-width="1.4"/></svg><svg class="a" style="left:788.4px;top:558px" width="10" height="10" viewBox="0 0 10 10"><rect x="1" y="1" width="6" height="6" fill="none" stroke="#d6d6d6" stroke-width="1"/><rect x="3.4" y="3.4" width="5.6" height="5.6" fill="#d6d6d6"/></svg><svg class="a" style="left:806.8px;top:558px" width="10" height="10" viewBox="0 0 10 10"><path d="M0.5 2.5H3V5H5" fill="none" stroke="#d6d6d6" stroke-width="1"/><rect x="4.6" y="3" width="5" height="5.6" fill="#d6d6d6"/></svg><svg class="a" style="left:826px;top:558px" width="10" height="10" viewBox="0 0 10 10"><path d="M1.5 1.5H9V9H4.2L1.5 6.4Z" fill="#d6d6d6"/></svg><svg class="a" style="left:844.3px;top:558px" width="10" height="10" viewBox="0 0 10 10"><path d="M1.5 2.6H8.5M3.6 2.4V1.2H6.4V2.4" fill="none" stroke="#d6d6d6" stroke-width="1"/><path d="M2.2 3.6H7.8L7.4 9.4H2.6Z" fill="#d6d6d6"/></svg>
<div class="a" style="left:525.6px;top:275.7px;width:389px;height:269.1px;background:#535353;border-radius:4.5px;box-shadow:0 9px 22px rgba(0,0,0,.36),0 1px 4px rgba(0,0,0,.3)"></div>
<div class="a" style="left:525.6px;top:275.7px;width:389px;height:15.4px;border-radius:4.5px 4.5px 0 0;background:linear-gradient(#e2e2e2,#d0d0d0 45%,#bdbdbd);border-bottom:1px solid #8e8e8e"></div>
<div class="t" style="left:525.6px;top:279px;width:389px;text-align:center;font-size:9.4px;color:#2a2a2a;-webkit-text-stroke:.2px #2a2a2a">拾色器</div>
<div class="t" style="left:536.5px;top:302px;font-size:9px;color:#ececec">选择颜色:</div>
<div class="a" style="left:536.4px;top:320px;width:183px;height:182.2px;background:linear-gradient(to bottom,rgba(139,139,139,0) 0%,rgba(139,139,139,.06) 25%,rgba(139,139,139,.32) 50%,rgba(139,139,139,.62) 70%,rgba(139,139,139,.88) 88%,rgba(139,139,139,1) 100%),linear-gradient(to right,#a40000 0%,#a80a00 3%,#b05800 10%,#9c9a00 17%,#18a000 25%,#00a010 34%,#009c38 42%,#009292 50.6%,#1448a0 58%,#2a00a2 64.5%,#5c009c 72%,#8a009a 78%,#a8009a 83.4%,#a80050 93%,#a40000 100%)"></div>
<div class="a" style="left:687.2px;top:463.6px;width:7.6px;height:7.6px;border:1px solid #f2f2f2;border-radius:50%"></div>
<div class="a" style="left:732.5px;top:320px;width:18.4px;height:182px;background:linear-gradient(to bottom,#ffcffa,#8a6f87 46%,#000 100%)"></div>
<svg class="a" style="left:727px;top:401.5px" width="5" height="6" viewBox="0 0 5 6"><path d="M0.3 0.3 L4.6 3 L0.3 5.7Z" fill="#c8c8c8"/></svg><svg class="a" style="left:751.6px;top:401.5px" width="5" height="6" viewBox="0 0 5 6"><path d="M4.7 0.3 L0.4 3 L4.7 5.7Z" fill="#c8c8c8"/></svg>
<div class="a" style="left:764px;top:316.2px;width:44.8px;height:57.3px;background:#926d8b;border:1.2px solid #262626;border-radius:1.5px"></div>
<svg class="a" style="left:819px;top:350.5px" width="10" height="10" viewBox="0 0 10 10"><path d="M5 0.8 L9 2.8 V7 L5 9.2 L1 7 V2.8 Z M1 2.8 L5 4.8 L9 2.8 M5 4.8 V9.2" fill="none" stroke="#bdbdbd" stroke-width="0.9"/></svg>
<div class="a" style="left:817.6px;top:363.4px;width:12.5px;height:12.3px;background:#ae4f9e;border:1.2px solid #e7b7dc"></div>
<div class="btn" style="top:316.8px;padding-left:23px">确定</div><div class="btn" style="top:337.8px;padding-left:23px">取消</div><div class="btn" style="top:358.5px;padding-left:13px">颜色色板</div>
<div class="rd" style="top:386.8px"></div><div class="pl" style="left:777px;top:385.3px">H:</div><div class="pf" style="top:384.3px">306°</div>
<div class="rd" style="top:404.9px"></div><div class="pl" style="left:777px;top:403.4px">S:</div><div class="pf" style="top:402.4px">19%</div>
<div class="rd" style="top:422.8px;background:#e4e4e4"><div class="a" style="left:1.5px;top:1.5px;width:3.6px;height:3.6px;border-radius:50%;background:#444"></div></div><div class="pl" style="left:777px;top:421.3px">B:</div><div class="pf" style="top:420.3px">54%</div>
<div class="rd" style="top:440.3px"></div><div class="pl" style="left:777px;top:438.8px">R:</div><div class="pf" style="top:437.8px">138</div>
<div class="rd" style="top:458.1px"></div><div class="pl" style="left:777px;top:456.6px">G:</div><div class="pf" style="top:455.6px">111</div>
<div class="rd" style="top:476.0px"></div><div class="pl" style="left:777px;top:474.5px">B:</div><div class="pf" style="top:473.5px">135</div>
<div class="pl" style="left:846.5px;top:438.8px;color:#dcdcdc;width:12px;text-align:right">C:</div><div class="pf" style="left:860.3px;top:437.8px;width:30px;padding-left:1.6px">55</div>
<div class="pl" style="left:846.5px;top:456.6px;color:#dcdcdc;width:12px;text-align:right">M:</div><div class="pf" style="left:860.3px;top:455.6px;width:30px;padding-left:1.6px">67</div>
<div class="pl" style="left:846.5px;top:474.5px;color:#dcdcdc;width:12px;text-align:right">Y:</div><div class="pf" style="left:860.3px;top:473.5px;width:30px;padding-left:1.6px">36</div>
<div class="pl" style="left:846.5px;top:492.3px;color:#dcdcdc;width:12px;text-align:right">K:</div><div class="pf" style="left:860.3px;top:491.3px;width:30px;padding-left:1.6px">0%</div>
<div class="pl" style="left:765px;top:492.3px;color:#d0d0d0">#</div>
<div class="a" style="left:773.4px;top:491.6px;width:64.8px;height:13.8px;background:#fff;border:1.6px solid #79b0ee;border-radius:2px"></div>
<div class="a" style="left:776.8px;top:493.6px;width:31.2px;height:9.8px;background:#b6d6fb"></div>
<div class="t" style="left:777.5px;top:492.5px;font-size:9.6px;color:#5d84b4">8a6f87</div>
<div class="a" style="left:537.3px;top:514px;width:8.6px;height:8.6px;border:1px solid #d4d4d4;border-radius:1.5px"></div>
<div class="t" style="left:549.6px;top:512.3px;font-size:9px;color:#f4f4f4;-webkit-text-stroke:.25px currentColor">仅限 Web 颜色</div>
<svg class="a" style="left:742px;top:517px;opacity:.33" width="114" height="44" viewBox="0 0 114 44"><circle cx="14.8" cy="15.4" r="10.2" fill="none" stroke="#2f78d6" stroke-width="3.2"/><path d="M9.2 25 h11.4 v5.6 a5.7 5.7 0 0 1 -11.4 0Z" fill="#2f78d6"/><path d="M11 10 v5.4 a3.8 3.8 0 0 0 7.6 0 v-5.4" fill="none" stroke="#2f78d6" stroke-width="2"/><g transform="translate(2.8 0)" fill="none" stroke="#2f78d6" stroke-width="3.3" stroke-linecap="round"><path d="M36 9 V18 a5.2 5.2 0 0 0 10.4 0 V9"/><path d="M53.5 9V23.4 M60.2 9V23.4 M66.9 9V23.4"/><path d="M74.2 9 V18 a5.2 5.2 0 0 0 10.4 0 V9"/><path d="M91.7 9V23.4 M98.4 9V23.4 M105.1 9V23.4"/></g><path d="M37 31 H110" stroke="#2f78d6" stroke-width="3.6" stroke-dasharray="3.2 1.4" opacity=".6"/></svg>
</div></body></html>
